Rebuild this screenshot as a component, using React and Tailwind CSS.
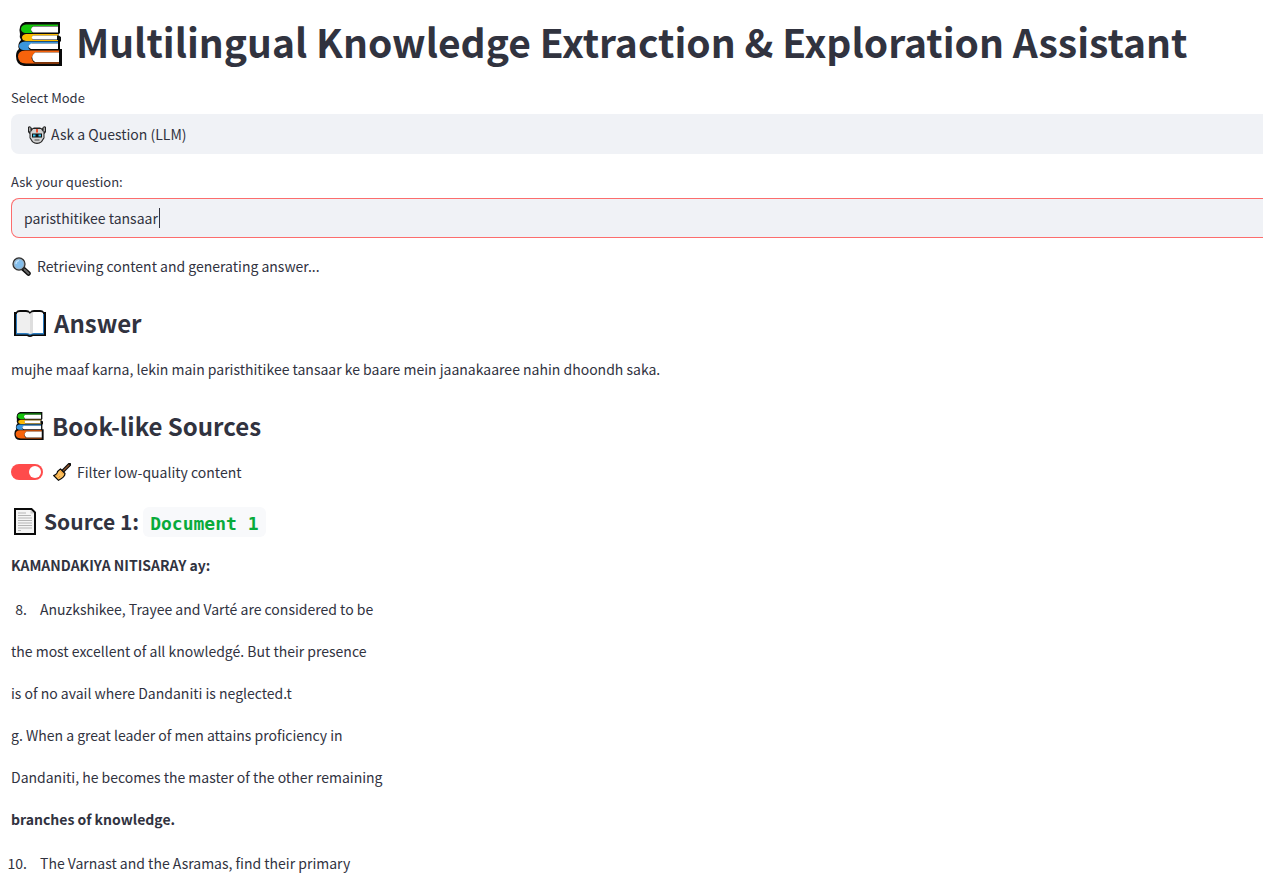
function Books({ className }) {
  return (
    <svg viewBox="0 0 46 44" className={className} aria-hidden="true">
      <path d="M9 0H44V11L42 13L45 15V19L44 20V27H46V44H8Q0 43 0 34Q0 29 3 27Q1 22 5 18Q3 15 4 12Q2 2 9 0Z" fill="#0a0a0a" />
      <path d="M10 2.500H42V4H17Q13 8 17 11H9Q5 10 5 7Q5 3 10 2.500Z" fill="#16c60c" />
      <path d="M17 4.500H42V10.500H17Q13 7.500 17 4.500Z" fill="#fff" />
      <path d="M10 12H42V13.500H17Q15 15.500 17 18H42V19H10Q6 18.500 6 15.500Q6 12.500 10 12Z" fill="#fcb900" />
      <path d="M17 13.500H41V17.500H17Q14.500 15.500 17 13.500Z" fill="#fff" />
      <path d="M9 19.500H42V21.500H16Q10 24.500 14 28H7Q3 27 3 24Q3 20 9 19.500Z" fill="#3a96dd" />
      <path d="M15 21.500H42V27H15Q10 24.500 15 21.500Z" fill="#fff" />
      <path d="M9 28.500H43V30.500H19Q13 35.500 18 40.500H43V41.500H10Q2 41 2 34.500Q2 29 9 28.500Z" fill="#f7630c" />
      <path d="M19 30.500H43V40H19Q13 35.500 19 30.500Z" fill="#fff" />
    </svg>
  );
}

function OpenBook({ className }) {
  return (
    <svg viewBox="0 0 32 27" className={className} aria-hidden="true">
      <path d="M0 2H2Q3 0 6 0H12Q15 0 16 2Q17 0 20 0H26Q29 0 30 2H32V26H19Q16 28 13 26H0Z" fill="#0a0a0a" />
      <path d="M2 4H30V24.500H18L16 25.500L14 24.500H2Z" fill="#2b7cc0" />
      <path d="M3 3Q4 2 6 2H12Q15 2 16 4V24Q14 23 12 23H3Z" fill="#efefef" />
      <path d="M29 3Q28 2 26 2H20Q17 2 16 4V24Q18 23 20 23H29Z" fill="#fff" />
      <path d="M16 4Q17 2.500 19 2.500V23L16 24Z" fill="#dedede" />
    </svg>
  );
}

function Page({ className }) {
  return (
    <svg viewBox="0 0 22 27" className={className} aria-hidden="true">
      <path d="M1 1H17.500L21 4.500V26H1Z" fill="#f5f5f5" stroke="#0a0a0a" strokeWidth="2" />
      <path d="M16.500 2L20 5.500H16.500Z" fill="#ccc" />
      <path d="M4 5H12M4 7.500H17M4 10H18M4 12.500H18M4 15H18M4 17.500H18M4 20H18M4 22.500H7" stroke="#b5b5b5" fill="none" />
    </svg>
  );
}

function Robot({ className }) {
  return (
    <svg viewBox="0 0 18 18" className={className} aria-hidden="true">
      <path d="M0 1Q1.500-.5 3 1L4 2.500L6 1.500H12L14 2.500L15 1Q16.500-.5 18 1V6L16.500 8V12L14 16Q9 20 4 16L1.500 12V8L0 6Z" fill="#222" />
      <path d="M1 1.500H2.500V6L1 5ZM15.500 1.500H17V5L15.500 6Z" fill="#aaa" />
      <path d="M5 3H13L15.500 6.500V11.500L13 15.500Q9 18 5 15.500L2.500 11.500V6.500Z" fill="#d2d2d2" />
      <path d="M8 3H10V6.500H8Z" fill="#f0502c" />
      <path d="M4 7.500H14V11.500H4Z" fill="#111" />
      <path d="M5 8.500H7.500V10.500H5ZM10.500 8.500H13V10.500H10.500Z" fill="#35c5f0" />
      <path d="M6.500 14H11.500" stroke="#444" strokeWidth="1" />
    </svg>
  );
}

function Magnifier({ className }) {
  return (
    <svg viewBox="0 0 19 19" className={className} aria-hidden="true">
      <path d="M10.500 11L16.500 16.500" stroke="#0a0a0a" strokeWidth="4.500" strokeLinecap="round" />
      <path d="M12.500 12.500L16.500 16.500" stroke="#686868" strokeWidth="2" strokeLinecap="round" />
      <circle cx="7" cy="7" r="5.900" fill="#83beec" stroke="#333" strokeWidth="1.500" />
      <circle cx="7" cy="7" r="4.900" fill="none" stroke="#a5adb5" strokeWidth="0.800" />
      <path d="M4 7Q4 4 7 3.500" stroke="#c5e4fb" strokeWidth="1.200" fill="none" />
    </svg>
  );
}

function Broom({ className }) {
  return (
    <svg viewBox="0 0 18 18" className={className} aria-hidden="true">
      <path d="M10 8L16.500 1.500" stroke="#0a0a0a" strokeWidth="3.500" strokeLinecap="round" />
      <path d="M10 8L16.300 1.700" stroke="#8e562e" strokeWidth="1.300" />
      <path d="M7.500 6L12 10.500Q12 14 5.500 17.300L0.700 12.500Q4.500 11 4.500 8.500Z" fill="#fcbf5c" stroke="#0a0a0a" strokeWidth="1.200" strokeLinejoin="round" />
      <path d="M7 7.500L10.500 11" stroke="#e8912d" strokeWidth="1" />
      <path d="M5 11.500L3 13.500M7 13L5.500 15" stroke="#d98327" strokeWidth="0.800" />
    </svg>
  );
}

const passages = [
  { id: 1, text: "the most excellent of all knowledgé. But their presence" },
  { id: 2, text: "is of no avail where Dandaniti is neglected.t" },
  { id: 3, text: "g. When a great leader of men attains proficiency in" },
  { id: 4, text: "Dandaniti, he becomes the master of the other remaining" },
];

function Numbered({ start, children }) {
  return (
    <ol start={start} className="mt-[18px] list-decimal pl-[19px]">
      <li className="pl-[10px]">{children}</li>
    </ol>
  );
}

export default function App() {
  return (
    <main className='overflow-hidden bg-white pl-[11px] font-["Noto_Sans_CJK_SC","Noto_Sans",sans-serif] text-[14px] leading-[26px] text-[#31333f]'>
      <h1 className="flex items-end gap-[14px] pt-4 pl-[5px] text-[39px] leading-[50px] font-bold whitespace-nowrap">
        <Books className="h-11 w-[46px] shrink-0" />
        Multilingual Knowledge Extraction &amp; Exploration Assistant
      </h1>

      <div className="-mr-4 mt-[22px] flex flex-col">
        <label htmlFor="mode" className="text-[13px] leading-5">Select Mode</label>
        <div className="relative mt-[6px]">
          <select id="mode" className="h-10 w-full appearance-none rounded-lg bg-[#f0f2f6] pl-10 text-[14px] outline-none">
            <option>Ask a Question (LLM)</option>
          </select>
          <Robot className="pointer-events-none absolute top-3 left-[17px] size-[18px]" />
        </div>
        <label htmlFor="question" className="mt-[18px] text-[13px] leading-5">Ask your question:</label>
        <div className="relative mt-[6px]">
          <input id="question" type="text" defaultValue="paristhitikee tansaar" className="h-10 w-full rounded-lg border border-[#ff4b4b]/80 bg-[#f0f2f6] px-3 text-[14px] outline-none" />
          <span className="pointer-events-none absolute top-[10px] left-[148px] h-5 w-px bg-[#31333f]" />
        </div>
      </div>

      <p className="mt-[15px] flex items-center gap-[6px] pl-px">
        <Magnifier className="size-[19px]" />
        Retrieving content and generating answer...
      </p>

      <h2 className="mt-[26px] flex items-center gap-2 pl-[3px] text-[24px] leading-9 font-bold">
        <OpenBook className="h-[27px] w-8" />
        Answer
      </h2>
      <p className="mt-[15px]">mujhe maaf karna, lekin main paristhitikee tansaar ke baare mein jaanakaaree nahin dhoondh saka.</p>

      <h2 className="mt-[26px] flex items-center gap-2 pl-[3px] text-[24px] leading-9 font-bold">
        <Books className="h-7 w-[30px]" />
        Book-like Sources
      </h2>
      <label className="mt-[15px] flex items-center">
        <input type="checkbox" role="switch" defaultChecked className="peer sr-only" />
        <span className="flex h-4 w-8 items-center justify-end rounded-full bg-[#ff4b4b] p-[2px]">
          <span className="size-3 rounded-full bg-white" />
        </span>
        <Broom className="mr-[6px] ml-[10px] size-[18px]" />
        Filter low-quality content
      </label>

      <h3 className="mt-5 flex items-center pl-[2px] text-[21px] leading-8 font-bold">
        <Page className="mr-[7px] h-[27px] w-6" />
        Source 1:
        <code className="ml-1 self-end rounded-md bg-[#f8f9fb] px-[7px] pt-1 font-['DejaVu_Sans_Mono',monospace] text-[18px] leading-[26px] font-bold text-[#09ab3b]">Document 1</code>
      </h3>

      <p className="mt-[15px] font-bold">KAMANDAKIYA NITISARAY ay:</p>
      <Numbered start={8}>Anuzkshikee, Trayee and Varté are considered to be</Numbered>
      {passages.map((p) => (
        <p key={p.id} className="mt-4">{p.text}</p>
      ))}
      <p className="mt-4 font-bold">branches of knowledge.</p>
      <Numbered start={10}>The Varnast and the Asramas, find their primary</Numbered>
    </main>
  );
}
